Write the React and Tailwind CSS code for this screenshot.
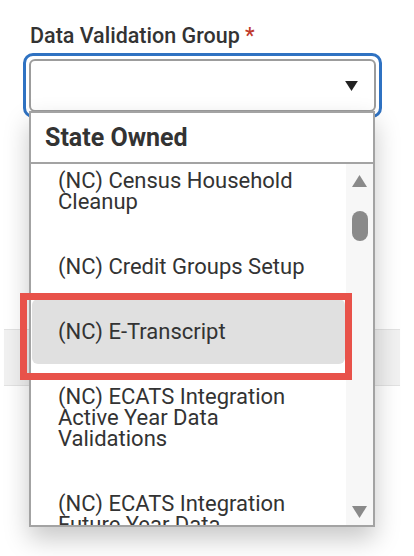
import React from 'react';

const Triangle = ({ up, className }) => (
  <svg viewBox="0 0 14 11" className={className} fill="currentColor">
    {up ? <path d="M7 0 L14 11 L0 11 Z" /> : <path d="M0 0 L14 0 L7 11 Z" />}
  </svg>
);

const items = [
  { label: ['(NC) Census Household', 'Cleanup'] },
  { label: ['(NC) Credit Groups Setup'] },
  { label: ['(NC) E-Transcript'], active: true },
  { label: ['(NC) ECATS Integration', 'Active Year Data', 'Validations'] },
  { label: ['(NC) ECATS Integration', 'Future Year Data', 'Validations'] },
];

function Option({ label, active }) {
  return (
    <div className={'mx-[1px] py-[22px] pl-[26px] pr-2 rounded-[6px] ' + (active ? 'bg-[#e0e0e0]' : '')}>
      {label.map((line) => (
        <div key={line} className="text-[22px] leading-[21px] text-[#333] whitespace-nowrap">
          {line}
        </div>
      ))}
    </div>
  );
}

export default function App() {
  return (
    <div className="w-[414px] h-[556px] bg-white overflow-hidden relative font-['Roboto',sans-serif]">
      <div className="pt-[24px] pl-[23px]">
        <label className="block ml-[7px] text-[21.5px] leading-[24px] font-medium text-[#333]">
          Data Validation Group <span className="text-[#c0392b]">*</span>
        </label>

        <div className="relative mt-[5px] w-[359px]">
          <div className="border-[3px] border-[#2f72c2] rounded-[10px] p-[3px]">
            <div className="h-[53px] border-2 border-[#9c9c9c] rounded-[6px] flex items-center justify-end pr-[16px]">
              <Triangle className="w-[13px] h-[10px] text-[#222]" />
            </div>
          </div>

          {/* open listbox */}
          <div className="absolute left-[6px] top-[58px] w-[346px] h-[416px] bg-white border-2 border-[#a3a3a3] shadow-[0_12px_24px_rgba(0,0,0,0.22)] flex flex-col z-10">
            <div className="h-[51px] shrink-0 border-b-2 border-[#a3a3a3] flex items-center pl-[14px]">
              <span className="text-[25px] font-bold text-[#333]">State Owned</span>
            </div>
            <div className="flex flex-1 min-h-0">
              <div className="flex-1 overflow-hidden">
                <div className="-mt-[16px]">
                  {items.map((it, i) => (
                    <Option key={i} {...it} />
                  ))}
                </div>
              </div>
              <div className="w-[27px] bg-[#f7f7f7] flex flex-col items-center pt-[11px] pb-[7px]">
                <Triangle up className="w-[15px] h-[12px] text-[#8a8a8a]" />
                <div className="mt-[24px] w-[16px] h-[30px] rounded-full bg-[#8a8a8a]" />
                <div className="flex-1" />
                <Triangle className="w-[15px] h-[12px] text-[#8a8a8a]" />
              </div>
            </div>
          </div>

          {/* highlight annotation */}
          <div className="absolute left-[-3px] top-[240px] w-[332px] h-[87px] border-[7px] border-[#e8524a] z-20 pointer-events-none" />
        </div>
      </div>

      {/* page row behind the listbox */}
      <div className="mt-[211px] ml-[4px] w-[396px] h-[57px] bg-[#f1f1f1] border-y border-[#e2e2e2]" />
    </div>
  );
}
